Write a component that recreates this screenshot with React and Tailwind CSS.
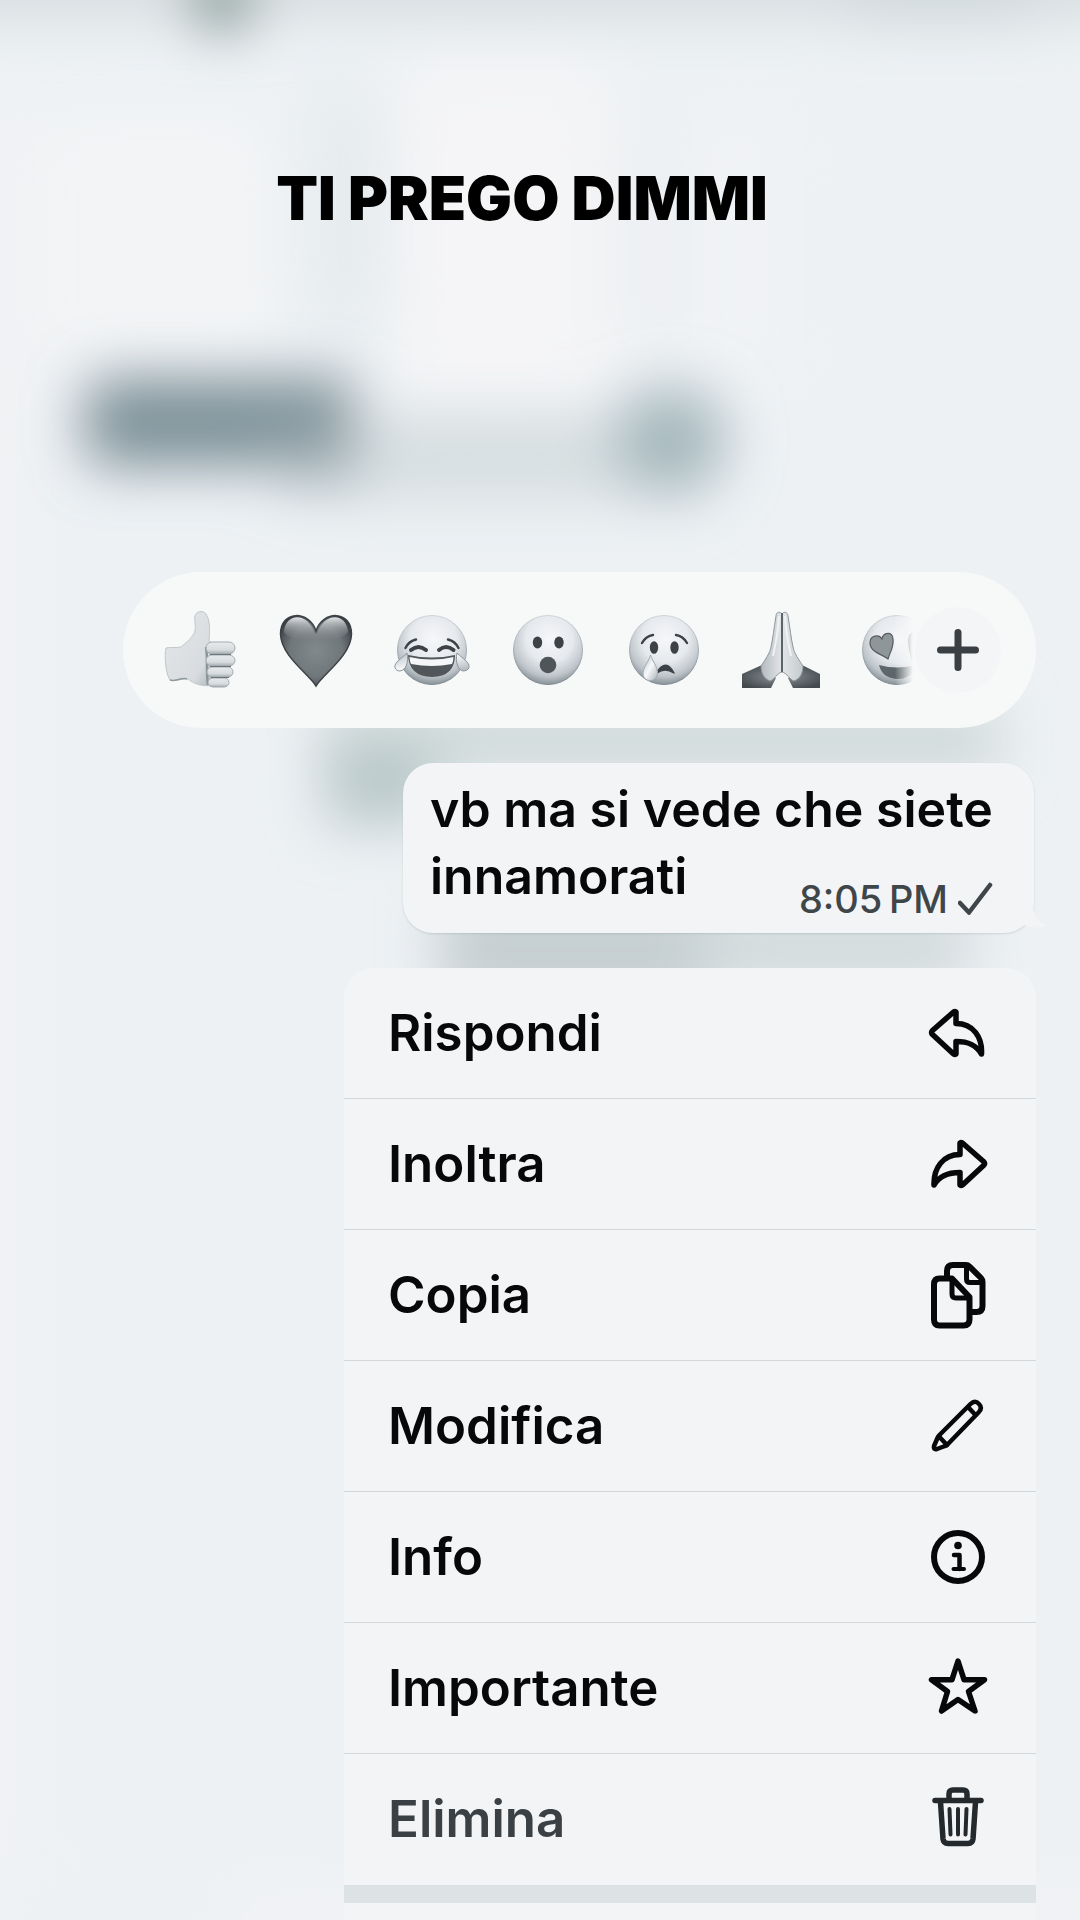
import React from "react";

const INK = "#3c4246";

function Backdrop() {
  return (
    <svg
      className="absolute inset-0 h-full w-full"
      viewBox="0 0 1080 1920"
      preserveAspectRatio="none"
      aria-hidden="true"
    >
      <defs>
        <filter id="b28" x="-100%" y="-100%" width="300%" height="300%">
          <feGaussianBlur stdDeviation="28" />
        </filter>
        <filter id="b36" x="-100%" y="-100%" width="300%" height="300%">
          <feGaussianBlur stdDeviation="36" />
        </filter>
      </defs>
      <rect width="1080" height="1920" fill="#edf1f4" />
      <g filter="url(#b36)">
        <rect x="40" y="110" width="240" height="270" fill="#f3f4f6" />
        <rect x="390" y="60" width="220" height="360" fill="#f5f5f7" />
        <rect x="600" y="110" width="180" height="290" fill="#f1f3f5" />
        <rect x="325" y="90" width="50" height="240" fill="#e0e7e9" />
        <rect x="635" y="110" width="30" height="240" fill="#e5ebed" />
        <rect x="-80" y="100" width="110" height="1800" fill="#f1f2f4" />
        <rect x="230" y="1895" width="900" height="80" fill="#f3f3f5" />
      </g>
      <g filter="url(#b28)">
        <rect x="-60" y="-50" width="1200" height="66" fill="#d6dddf" />
        <circle cx="222" cy="-2" r="32" fill="#6f8784" />
        <rect x="850" y="-40" width="180" height="62" fill="#cfd7d9" />
        <rect x="330" y="415" width="370" height="84" fill="#d6dee0" />
        <rect x="85" y="378" width="270" height="88" rx="20" fill="#7e9199" />
        <rect x="270" y="440" width="90" height="45" rx="20" fill="#a3b1b7" />
        <rect x="615" y="388" width="110" height="104" rx="45" fill="#a6b8bd" />
        <rect x="320" y="705" width="680" height="70" fill="#cfd9d9" />
        <rect x="325" y="745" width="110" height="80" fill="#b9c8c9" />
        <rect x="440" y="890" width="280" height="120" fill="#c6cfd1" />
        <rect x="700" y="900" width="270" height="90" fill="#d3dbdd" />
      </g>
    </svg>
  );
}

function EmojiDefs() {
  return (
    <svg className="absolute h-0 w-0" aria-hidden="true">
      <defs>
        <radialGradient id="face" cx="0.52" cy="0.34" r="0.68">
          <stop offset="0" stopColor="#f6f7fa" />
          <stop offset="0.5" stopColor="#e6e9ed" />
          <stop offset="0.8" stopColor="#bdc4c9" />
          <stop offset="1" stopColor="#7f8a90" />
        </radialGradient>
        <linearGradient id="rim" x1="0" y1="0" x2="0" y2="1">
          <stop offset="0" stopColor="#cfd3d6" />
          <stop offset="1" stopColor="#7c878d" />
        </linearGradient>
        <radialGradient id="heart" cx="0.5" cy="0.5" r="0.62">
          <stop offset="0" stopColor="#82898d" />
          <stop offset="0.6" stopColor="#70777b" />
          <stop offset="1" stopColor="#34383d" />
        </radialGradient>
        <linearGradient id="shine" x1="0" y1="0" x2="0" y2="1">
          <stop offset="0" stopColor="#e4e6e9" />
          <stop offset="1" stopColor="#858c90" stopOpacity="0" />
        </linearGradient>
        <linearGradient id="skin" x1="0" y1="0" x2="1" y2="1">
          <stop offset="0" stopColor="#e4e7e9" />
          <stop offset="0.75" stopColor="#d8dcde" />
          <stop offset="1" stopColor="#adb4b8" />
        </linearGradient>
        <linearGradient id="finger" x1="0" y1="0" x2="0" y2="1">
          <stop offset="0" stopColor="#e8ebed" />
          <stop offset="0.65" stopColor="#d8dcdf" />
          <stop offset="1" stopColor="#a3abb0" />
        </linearGradient>
        <linearGradient id="drop" x1="0" y1="0" x2="1" y2="1">
          <stop offset="0" stopColor="#b9c1c6" />
          <stop offset="0.5" stopColor="#f7f8fa" />
          <stop offset="1" stopColor="#aab3b8" />
        </linearGradient>
        <radialGradient id="sleeve" cx="0.5" cy="0.5" r="0.6">
          <stop offset="0" stopColor="#8c959a" />
          <stop offset="1" stopColor="#43494d" />
        </radialGradient>
        <linearGradient id="palm" x1="0" y1="0" x2="1" y2="0">
          <stop offset="0" stopColor="#b3babe" />
          <stop offset="0.5" stopColor="#e3e6e9" />
          <stop offset="1" stopColor="#c4cacd" />
        </linearGradient>
      </defs>
    </svg>
  );
}

const Face = () => (
  <circle cx="40" cy="40" r="34.5" fill="url(#face)" stroke="url(#rim)" strokeWidth="1" />
);

const Thumb = () => (
  <>
    <path
      d="M6 38 C10 37 16 38 21 37 C27 32 33 27 35 21 C36 15 34 9 35 6 C36 1 43 0 46 4 C50 10 50 19 49 31 L54 34 L54 75 C45 77 35 75 28 69 C23 68 15 72 10 70 C6 65 4 46 6 38 Z"
      fill="url(#skin)"
      stroke="#c0c6ca"
      strokeWidth="1"
    />
    <path d="M10 70 C15 72 22 67 27 69" stroke="#8f989d" strokeWidth="1.5" fill="none" />
    <path d="M46 37 C48 49 46 62 48 75" stroke="#8a9499" strokeWidth="2.5" fill="none" />
    <g fill="url(#finger)" stroke="#a3abb0" strokeWidth="1">
      <rect x="46" y="32" width="29" height="12" rx="6" />
      <rect x="46" y="45" width="29" height="11" rx="6" />
      <rect x="47" y="57" width="26" height="10" rx="5" />
      <rect x="48" y="68" width="21" height="9" rx="5" />
    </g>
    <path d="M50 44.500 H71 M50 56.500 H71 M51 67.500 H69" stroke="#6c757a" strokeWidth="1.2" />
  </>
);

const Heart = () => (
  <>
    <path
      d="M40 76 C33 64 5 46 4.500 24 C4.500 0 33 0 40 21 C47 0 75.500 0 75.500 24 C75 46 47 64 40 76 Z"
      fill="url(#heart)"
      stroke="#3b4145"
      strokeWidth="1.5"
    />
    <path
      d="M8 22 C9 3 32 1 39 24 L41 24 C48 1 71 3 72 22 C66 34 14 34 8 22 Z"
      fill="url(#shine)"
    />
  </>
);

const Laugh = () => (
  <>
    <Face />
    <path
      d="M13.500 38 Q17 31 24 29.500 M56 29.500 Q63 31 66.500 38"
      stroke={INK}
      strokeWidth="2.4"
      fill="none"
      strokeLinecap="round"
    />
    <path
      d="M19 40 Q26.500 34 34 40 M47 40 Q54 34 61.500 40"
      stroke={INK}
      strokeWidth="4"
      fill="none"
      strokeLinecap="round"
    />
    <path d="M16 45 Q40 50 63 45 Q63 66.500 40 67 Q17 66.500 16 45 Z" fill="#50565a" />
    <path d="M17.500 47 Q40 52 61.500 47 Q61.500 51 60 54 Q40 58 19 54 Q17.500 51 17.500 47 Z" fill="#f4f6f8" />
    <path
      d="M15 43 C17 52 14 60 8 61 C3 61 1 56 5 52 C9 48 12 46 15 43 Z M65 43 C63 52 66 60 71 61 C77 61 79 56 75 52 C71 48 68 46 65 43 Z"
      fill="url(#drop)"
      stroke="#89949a"
      strokeWidth="1"
    />
  </>
);

const Wow = () => (
  <>
    <Face />
    <ellipse cx="29.5" cy="32.500" rx="4.7" ry="6" fill={INK} />
    <ellipse cx="51" cy="32.500" rx="4.7" ry="6" fill={INK} />
    <circle cx="40" cy="55" r="8.3" fill="#4f565a" />
  </>
);

const Cry = () => (
  <>
    <Face />
    <path
      d="M18 33 Q22 26 29 25 M52 25 Q59 26 63 33"
      stroke={INK}
      strokeWidth="2.4"
      fill="none"
      strokeLinecap="round"
    />
    <ellipse cx="30" cy="37.500" rx="4.2" ry="6.3" fill={INK} />
    <ellipse cx="50.500" cy="37.500" rx="4.2" ry="6.3" fill={INK} />
    <path
      d="M33 62 Q42 48 50 63 Q41 57 33 63 Z"
      fill={INK}
      stroke={INK}
      strokeWidth="1.5"
      strokeLinejoin="round"
    />
    <path
      d="M26.500 45 C29 52 33.500 57 33.500 63 C33.500 73 18.500 73 19 63 C19.500 57 24.500 52 26.500 45 Z"
      fill="url(#drop)"
      stroke="#a3acb1"
      strokeWidth="1"
    />
  </>
);

const Pray = () => (
  <>
    <path d="M2 64 L22 55 L36 68 L31 78 H2 Z M80 64 L62 55 L48 68 L53 78 H80 Z" fill="url(#sleeve)" />
    <path
      d="M42 4 C40 1 36 2 36 6 C34 18 33 28 31 37 C30 43 25 50 21 56 C21 63 24 69 30 71 C34 70 37 63 42 62 C47 63 50 70 54 71 C60 69 63 63 63 56 C59 50 54 43 53 37 C51 28 50 18 48 6 C48 2 44 1 42 4 Z"
      fill="url(#palm)"
      stroke="#8d969b"
      strokeWidth="1"
    />
    <path d="M42 3 V62" stroke="#5b6468" strokeWidth="2" />
    <path d="M39 6 C38 24 35 36 33 46 M45 6 C46 24 49 36 51 46" stroke="#f0f2f4" strokeWidth="2" fill="none" />
  </>
);

const HeartEyes = () => (
  <>
    <circle cx="41" cy="40" r="34.5" fill="url(#face)" stroke="url(#rim)" strokeWidth="1" />
    <path
      d="M32 49 C26 44 14 42 14 33 C14 25 23 24 26 29 C27 22 37 21 37 29 C38 37 34 42 32 49 Z M56 49 C62 44 72 42 72 33 C72 25 65 24 62 29 C61 22 53 21 53 29 C52 37 54 42 56 49 Z"
      fill="#8e969a"
      stroke="#555d61"
      strokeWidth="1.2"
    />
    <path d="M23 55 Q41 60 60 55 Q57 69 41 69 Q26 68 23 55 Z" fill="#5d666a" />
  </>
);

const reactions = [
  ["Pollice in su", Thumb],
  ["Cuore", Heart],
  ["Risata", Laugh],
  ["Stupore", Wow],
  ["Pianto", Cry],
  ["Mani giunte", Pray],
  ["Occhi a cuore", HeartEyes],
];

function ReactionBar() {
  return (
    <div className="ml-[123px] mr-11 flex h-[156px] items-center rounded-full bg-[#f7f9f9] pl-[37px] pr-[35px]">
      <div className="flex min-w-0 flex-1 gap-9 overflow-hidden [mask-image:linear-gradient(to_right,#000_calc(100%-20px),transparent_calc(100%-2px))]">
        {reactions.map(([label, Art]) => (
          <button key={label} type="button" aria-label={label} className="size-20 shrink-0">
            <svg viewBox="0 0 80 80" className="size-20">
              <Art />
            </svg>
          </button>
        ))}
      </div>
      <button
        type="button"
        aria-label="Altre reazioni"
        className="flex size-[86px] shrink-0 items-center justify-center rounded-full bg-[#f4f5f7]"
      >
        <svg viewBox="0 0 42 42" className="size-[42px]">
          <path d="M21 3.500 V38.500 M3.500 21 H38.500" stroke="#3a3f43" strokeWidth="7" strokeLinecap="round" />
        </svg>
      </button>
    </div>
  );
}

function Message() {
  return (
    <div className="relative mr-[46px] mt-[35px] grid h-[170px] w-[631px] self-end rounded-[30px] bg-[#f2f4f6] pl-[27px] pr-8 shadow-[0_1px_2px_rgba(120,135,140,0.25)]">
      <svg viewBox="0 0 30 24" className="absolute -right-3 bottom-1 h-6 w-[30px]" aria-hidden="true">
        <path d="M16 0 C18 10 22 17 30 21 C20 24 8 22 2 16 Z" fill="#f2f4f6" />
      </svg>
      <p className="col-start-1 row-start-1 mt-[13px] text-[50px] font-semibold leading-[67px] text-[#060809]">
        vb ma si vede che siete innamorati
      </p>
      <div className="col-start-1 row-start-1 mb-2 mr-2 flex items-center gap-2.5 self-end justify-self-end text-[#3f464a]">
        <time className="text-[38px] font-medium leading-[52px]">8:05{"\u2009"}PM</time>
        <svg viewBox="0 0 36 34" className="h-[34px] w-9" role="img" aria-label="Inviato">
          <path
            d="M2 21 L11 30.500 L32 3"
            fill="none"
            stroke="currentColor"
            strokeWidth="4.5"
            strokeLinecap="round"
            strokeLinejoin="round"
          />
        </svg>
      </div>
    </div>
  );
}

const ReplyIcon = () => (
  <path d="M31 11 V22.500 C48 22.500 57.500 36 56.500 53 C51 43.500 43 40.500 31 40.500 V53 Q29.500 54 28 52.500 L7.500 33.500 Q5.500 31.500 7.500 29.500 L28 11.500 Q29.500 10 31 11 Z" />
);
const ForwardIcon = () => (
  <path d="M35 11 V22.500 C18 22.500 8.500 36 9 53 C14.500 43.500 23 40.500 35 40.500 V53 Q36.500 54 38 52.500 L58.500 33.500 Q60.500 31.500 58.500 29.500 L38 11.500 Q36.500 10 35 11 Z" />
);
const CopyIcon = () => (
  <g strokeWidth="6">
    <path d="M27 15.500 H14.500 Q9 15.500 9 21.500 V56.500 Q9 62.500 14.500 62.500 H38.500 Q44.500 62.500 44.500 56.500 V34 Z" />
    <path d="M27 17 V31 Q27 35 31 35 H43" strokeWidth="5" />
    <path d="M22 14 V8 Q22 2 28 2 H41 Q43 2 44.500 3.500 L56 15 Q57.500 16.500 57.500 19 V43 Q57.500 49 51.500 49 H47" />
    <path d="M41.500 4 V16 Q41.500 19.500 45 19.500 H56" strokeWidth="5" />
  </g>
);
const PencilIcon = () => (
  <g strokeWidth="4.5">
    <path d="M14 41.500 L45.500 10 Q50 5.500 54 10 Q58 14 53.500 18.500 L22.500 50.500 Q21.500 51.500 20 52 L12 55 Q8 56 9 52 L12.500 44 Q13 42.500 14 41.500 Z" />
    <path d="M43.500 13.500 L50.500 21 M14 42.500 L22 51" />
  </g>
);
const InfoIcon = () => (
  <>
    <circle cx="33" cy="32" r="24" strokeWidth="6" />
    <circle cx="33" cy="20.500" r="3.800" fill="currentColor" stroke="none" />
    <path d="M29 30 H34.500 V44" strokeWidth="4.5" />
    <path d="M28.500 44 H39" strokeWidth="4" />
  </>
);
const StarIcon = () => (
  <path d="M33 5 L39 23.700 H59.500 L43.500 35.500 L50 55 L33 43.500 L16.500 55 L22.500 35.500 L6.500 23.700 H27 Z" />
);
const TrashIcon = () => (
  <>
    <path d="M10 13.500 H56" />
    <path d="M24 12 V7 Q24 3 28 3 H38 Q42 3 42 7 V12" />
    <path d="M15.500 15 L18 52 Q18.500 56.500 23 56.500 H43 Q47.500 56.500 48 52 L50.500 15" />
    <path d="M24.500 22 L25.500 47.500 M33 22 V47.500 M41.500 22 L40.500 47.500" strokeWidth="4" />
  </>
);

const actions = [
  ["Rispondi", ReplyIcon],
  ["Inoltra", ForwardIcon],
  ["Copia", CopyIcon],
  ["Modifica", PencilIcon],
  ["Info", InfoIcon],
  ["Importante", StarIcon],
  ["Elimina", TrashIcon],
];

function ActionMenu() {
  return (
    <nav className="mr-11 mt-[35px] w-[692px] self-end overflow-hidden rounded-t-[30px] bg-[#f2f4f6]">
      <ul>
        {actions.map(([label, Icon]) => (
          <li key={label} className="border-b border-[#d3d7db] last:border-[#f2f4f6]">
            <button
              type="button"
              className={
                "flex h-[130px] w-full items-center justify-between pl-11 pr-[47px] text-left text-[51px] font-semibold leading-[60px] " +
                (label === "Elimina" ? "text-[#3a4044]" : "text-[#060809]")
              }
            >
              {label}
              <svg
                viewBox="0 -4 64 72"
                className={"h-[72px] w-16 " + (label === "Elimina" ? "text-[#24292d]" : "text-[#060809]")}
                fill="none"
                stroke="currentColor"
                strokeWidth="5.5"
                strokeLinecap="round"
                strokeLinejoin="round"
                aria-hidden="true"
              >
                <Icon />
              </svg>
            </button>
          </li>
        ))}
      </ul>
      <div className="h-[18px] bg-[#dde3e4]" />
      <div className="h-[17px]" />
    </nav>
  );
}

export default function App() {
  return (
    <main className="relative flex min-h-screen flex-col overflow-hidden bg-[#edf1f4] font-['Inter','Liberation_Sans',sans-serif]">
      <Backdrop />
      <EmojiDefs />
      <div className="relative flex flex-col">
        <h1 className="mb-[338px] mt-[162px] pr-9 text-center text-[61px] font-black leading-[72px] text-black">
          TI PREGO DIMMI
        </h1>
        <ReactionBar />
        <Message />
        <ActionMenu />
      </div>
    </main>
  );
}
